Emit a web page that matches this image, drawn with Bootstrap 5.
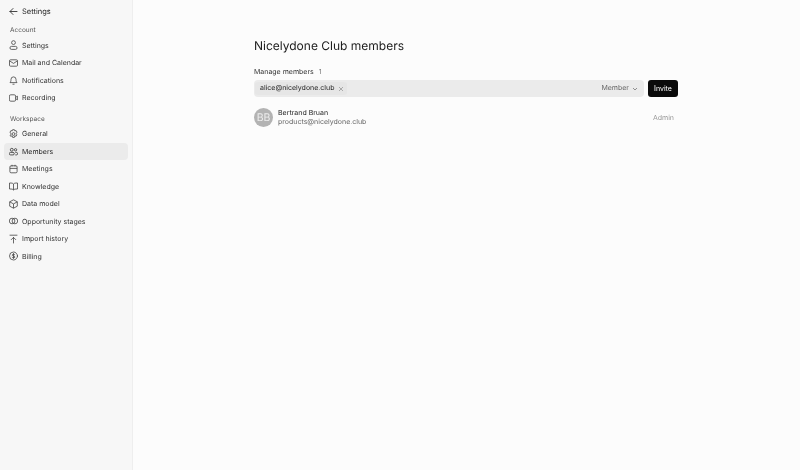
<!DOCTYPE html>
<html lang="en">
<head>
    <meta charset="UTF-8">
    <title>Members - Settings</title>
    <link href="https://cdn.jsdelivr.net/npm/bootstrap@5.3.3/dist/css/bootstrap.min.css" rel="stylesheet">
    <style>
        html, body { height: 100%; }
        body {
            background: #fcfcfc;
            color: #262626;
            font-family: Inter, "Liberation Sans", sans-serif;
            font-size: 7px;
            text-rendering: geometricPrecision;
            overflow: hidden;
        }
        /* the reference is a soft downscaled capture */
        .app { height: 470px; filter: blur(.35px); }
        .side {
            width: 133px;
            background: #f7f7f7;
            border-right: 1px solid #eeeeee;
            padding: 0 4px;
        }
        /* keeps sidebar text greyscale, no colour fringes */
        .side span, .group-label { opacity: .99; }
        .side-top {
            height: 23px;
            padding-left: 5px;
            gap: 4px;
            font-size: 7.5px;
            color: #222;
        }
        .group-label {
            font-size: 6.5px;
            color: #555;
            padding-left: 6px;
            height: 12px;
            line-height: 12px;
        }
        .group-first { margin-top: 1px; margin-bottom: .5px; }
        .group-next { margin-top: 6.5px; margin-bottom: .5px; }
        .side-item {
            height: 17.45px;
            padding-left: 5px;
            gap: 4px;
            color: #2e2e2e;
            border-radius: 4px;
            text-decoration: none;
            line-height: 1;
        }
        .side-item.active { background: #ebebeb; color: #222; }
        .side-item svg, .side-top svg { flex: none; }
        .content { padding: 38px 122px 0 121px; }
        .page-title { font-size: 12px; font-weight: 400; margin: 0 0 12px; line-height: 16px; color: #1c1c1c; }
        .field-label { color: #333; line-height: 11px; margin-bottom: 3px; }
        .field-label span { color: #777; margin-left: 3px; }
        .invite-box {
            height: 17px;
            background: #ebebeb;
            border-radius: 4px;
            padding: 0 6px 0 1px;
        }
        .chip {
            height: 13px;
            padding: 0 3px 0 5px;
            gap: 4px;
            background: #e6e6e6;
            border-radius: 3px;
            color: #222;
        }
        .role-pick { color: #666; gap: 3px; }
        .btn-invite {
            background: #0a0a0a;
            color: #fff;
            font-size: 7px;
            width: 30px;
            height: 17px;
            padding: 0;
            border: 0;
            border-radius: 3px;
            line-height: 17px;
        }
        .btn-invite:hover { background: #0a0a0a; color: #fff; }
        .member-row { margin-top: 11px; gap: 5px; }
        .avatar {
            width: 19px;
            height: 19px;
            background: #b3b3b3;
            color: #ececec;
            font-size: 10.5px;
            border-radius: 50%;
        }
        .member-text { margin-top: -1px; }
        .member-name { color: #222; line-height: 9px; }
        .member-mail { color: #666; line-height: 9px; }
        .member-role { color: #999; padding: 1px 4px 0 0; }
    </style>
</head>
<body>
    <div class="app d-flex">
        <!-- Sidebar -->
        <aside class="side flex-shrink-0">
            <div class="side-top d-flex align-items-center">
                <svg width="9" height="9" viewBox="0 0 9 9" fill="none" stroke="#333" stroke-width=".9" stroke-linecap="round" stroke-linejoin="round"><path d="M8 4.500H1M4 1.500l-3 3 3 3"/></svg>
                <span>Settings</span>
            </div>
            <div class="group-label group-first">Account</div>
            <a class="side-item d-flex align-items-center" href="#">
                <svg width="9" height="10" viewBox="0 0 9 10" fill="none" stroke="#444" stroke-width=".8"><circle cx="4.500" cy="2.600" r="1.900"/><rect x="1" y="6.400" width="7" height="3" rx="1.400"/></svg>
                <span>Settings</span>
            </a>
            <a class="side-item d-flex align-items-center" href="#">
                <svg width="9" height="10" viewBox="0 0 9 10" fill="none" stroke="#444" stroke-width=".8" stroke-linejoin="round"><rect x=".5" y="1.800" width="8" height="6.400" rx="1"/><path d="M.8 3l3.700 2.400L8.200 3"/></svg>
                <span>Mail and Calendar</span>
            </a>
            <a class="side-item d-flex align-items-center" href="#">
                <svg width="9" height="10" viewBox="0 0 9 10" fill="none" stroke="#444" stroke-width=".8" stroke-linejoin="round"><path d="M1 7.600c.7-.8 1-1.600 1-3.200a2.500 2.500 0 0 1 5 0c0 1.600.3 2.400 1 3.200z"/><path d="M3.500 9.200h2"/></svg>
                <span>Notifications</span>
            </a>
            <a class="side-item d-flex align-items-center" href="#">
                <svg width="9" height="10" viewBox="0 0 9 10" fill="none" stroke="#444" stroke-width=".8" stroke-linejoin="round"><rect x=".4" y="1.800" width="6.200" height="6.400" rx="1.300"/><path d="M6.600 4.200l2-1v3.600l-2-1"/></svg>
                <span>Recording</span>
            </a>
            <div class="group-label group-next">Workspace</div>
            <a class="side-item d-flex align-items-center" href="#">
                <svg width="9" height="10" viewBox="0 0 9 10" fill="none" stroke="#444" stroke-width=".8" stroke-linejoin="round"><path d="M3.600.7h1.800l.4 1.200 1.300-.3.900 1.600-.9 1 .1.600.8.800-.9 1.600-1.300-.3-.4 1.500H3.600l-.4-1.500-1.300.3L1 6.700l.8-.9V4.200l-.8-1 .9-1.600 1.300.3z"/><circle cx="4.500" cy="5" r="1.400"/></svg>
                <span>General</span>
            </a>
            <a class="side-item active d-flex align-items-center" href="#">
                <svg width="9" height="9" viewBox="0 0 10 10" fill="none" stroke="#333" stroke-width=".9"><circle cx="3.100" cy="3.100" r="1.600"/><rect x=".4" y="6" width="5.400" height="2.800" rx="1.300"/><circle cx="7.300" cy="3.100" r="1.300"/><path d="M7 6h1.200c1 0 1.400.7 1.400 1.400s-.4 1.400-1.400 1.400H7"/></svg>
                <span>Members</span>
            </a>
            <a class="side-item d-flex align-items-center" href="#">
                <svg width="9" height="10" viewBox="0 0 9 10" fill="none" stroke="#444" stroke-width=".8"><rect x=".9" y="1.800" width="7.200" height="7" rx="1.200"/><path d="M.9 4.400h7.200M3 .8v1.600M6 .8v1.600"/></svg>
                <span>Meetings</span>
            </a>
            <a class="side-item d-flex align-items-center" href="#">
                <svg width="9" height="10" viewBox="0 0 9 10" fill="none" stroke="#444" stroke-width=".8" stroke-linejoin="round"><path d="M4.500 3c-.6-.8-1.500-1-4-1v6c2.500 0 3.400.2 4 1 .6-.8 1.500-1 4-1V2c-2.500 0-3.400.2-4 1zM4.500 3v6"/></svg>
                <span>Knowledge</span>
            </a>
            <a class="side-item d-flex align-items-center" href="#">
                <svg width="9" height="10" viewBox="0 0 9 10" fill="none" stroke="#444" stroke-width=".8" stroke-linejoin="round"><path d="M4.500 .8l3.800 2v4.400l-3.800 2-3.800-2V2.800zM.7 2.800l3.800 2.100 3.800-2.100M4.500 4.900v4.300"/></svg>
                <span>Data model</span>
            </a>
            <a class="side-item d-flex align-items-center" href="#">
                <svg width="9" height="10" viewBox="0 0 9 10" fill="none" stroke="#444" stroke-width=".8"><circle cx="3.100" cy="5" r="2.800"/><circle cx="5.900" cy="5" r="2.800"/></svg>
                <span>Opportunity stages</span>
            </a>
            <a class="side-item d-flex align-items-center" href="#">
                <svg width="9" height="10" viewBox="0 0 9 10" fill="none" stroke="#444" stroke-width=".8" stroke-linecap="round" stroke-linejoin="round"><path d="M1 1.200h7M4.500 9V3.400M2.300 5.600l2.200-2.200 2.200 2.200"/></svg>
                <span>Import history</span>
            </a>
            <a class="side-item d-flex align-items-center" href="#">
                <svg width="9" height="10" viewBox="0 0 9 10" fill="none" stroke="#444" stroke-width=".8" stroke-linecap="round"><circle cx="4.500" cy="5" r="4"/><path d="M5.800 3.700C5.400 3.100 3.200 3 3.200 4.100c0 1.300 2.700.6 2.700 1.900 0 1.100-2.300 1-2.800.3M4.500 2.500v5"/></svg>
                <span>Billing</span>
            </a>
        </aside>

        <!-- Main content -->
        <main class="content flex-grow-1">
            <h1 class="page-title">Nicelydone Club members</h1>
            <div class="field-label">Manage members <span>1</span></div>
            <div class="d-flex gap-1">
                <div class="invite-box d-flex flex-grow-1 align-items-center justify-content-between">
                    <div class="chip d-flex align-items-center">
                        <span>alice@nicelydone.club</span>
                        <svg width="6" height="6" viewBox="0 0 6 6" stroke="#999" stroke-width=".8"><path d="M1 1l4 4M5 1L1 5"/></svg>
                    </div>
                    <div class="role-pick d-flex align-items-center">
                        <span>Member</span>
                        <svg width="6" height="6" viewBox="0 0 6 6" fill="none" stroke="#777" stroke-width=".8"><path d="M1 2l2 2 2-2"/></svg>
                    </div>
                </div>
                <button type="button" class="btn btn-invite">Invite</button>
            </div>
            <div class="member-row d-flex align-items-center">
                <div class="avatar d-flex align-items-center justify-content-center flex-shrink-0">BB</div>
                <div class="member-text flex-grow-1">
                    <div class="member-name">Bertrand Bruan</div>
                    <div class="member-mail">products@nicelydone.club</div>
                </div>
                <div class="member-role">Admin</div>
            </div>
        </main>
    </div>
    <script src="https://cdn.jsdelivr.net/npm/bootstrap@5.3.3/dist/js/bootstrap.bundle.min.js"></script>
</body>
</html>
